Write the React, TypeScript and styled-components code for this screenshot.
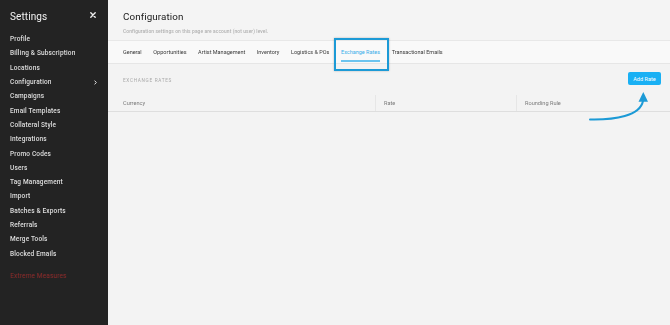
import React from "react";
import styled, { createGlobalStyle } from "styled-components";

const Global = createGlobalStyle`
  html, body { margin: 0; padding: 0; height: 100%; }
  body { font-family: "Roboto", "Liberation Sans", sans-serif; background: #f3f3f3; }
  #root { height: 100%; }
`;

const Shell = styled.div`
  display: flex;
  height: 325px;
  width: 670px;
  overflow: hidden;
`;

const Sidebar = styled.aside`
  width: 108px;
  flex: none;
  background: #232323;
  padding: 0 10px;
  box-sizing: border-box;
`;

const SidebarHeader = styled.div`
  height: 32px;
  display: flex;
  align-items: center;
  justify-content: space-between;
  box-sizing: border-box;
`;

const SidebarTitle = styled.h1`
  margin: 0;
  font-size: 10px;
  font-weight: 400;
  color: #f2f2f2;
  letter-spacing: 0.1px;
  filter: grayscale(1);
`;

const CloseIcon = styled.svg`
  margin-right: 2px;
  margin-bottom: 3px;
`;

const NavItem = styled.div<{ $danger?: boolean; $gap?: boolean }>`
  height: 14.3px;
  display: flex;
  align-items: center;
  justify-content: space-between;
  font-size: 6.5px;
  font-weight: ${(p) => (p.$danger ? 400 : 500)};
  letter-spacing: 0.15px;
  color: ${(p) => (p.$danger ? "#8a2b2b" : "#dedede")};
  margin-top: ${(p) => (p.$gap ? "8px" : "0")};
  filter: ${(p) => (p.$danger ? "none" : "grayscale(1)")};
`;

const Chevron = styled.svg`
  margin-right: 1px;
`;

const Main = styled.main`
  flex: 1;
  display: flex;
  flex-direction: column;
  position: relative;
  background: #f3f3f3;
`;

const Header = styled.header`
  height: 41px;
  padding: 10px 15px 0;
  box-sizing: border-box;
  border-bottom: 1px solid #e8e8e8;
  background: #f4f4f4;
`;

const Title = styled.h2`
  margin: 0;
  font-size: 9.8px;
  line-height: 14px;
  font-weight: 400;
  color: #1a1a1a;
  letter-spacing: 0.1px;
  filter: grayscale(1);
`;

const Subtitle = styled.p`
  margin: 3px 0 0;
  font-size: 4.9px;
  line-height: 8px;
  font-weight: 500;
  color: #b0b0b0;
  letter-spacing: 0.1px;
  filter: grayscale(1);
`;

const TabBar = styled.nav`
  height: 23px;
  display: flex;
  gap: 11.6px;
  padding: 0 15px;
  box-sizing: border-box;
  background: #f9f9f9;
  border-bottom: 1px solid #e6e6e6;
`;

const Tab = styled.div<{ $active?: boolean }>`
  height: 21px;
  box-sizing: border-box;
  display: flex;
  align-items: center;
  font-size: 5.5px;
  color: ${(p) => (p.$active ? "#3aaeea" : "#3a3a3a")};
  border-bottom: 2px solid ${(p) => (p.$active ? "#6cc4ef" : "transparent")};
  padding-top: 2px;
  filter: ${(p) => (p.$active ? "none" : "grayscale(1)")};
`;

const Content = styled.section`
  flex: 1;
  padding-top: 8px;
`;

const SectionRow = styled.div`
  display: flex;
  align-items: center;
  justify-content: space-between;
  padding: 0 9px 0 15px;
  height: 13px;
`;

const SectionLabel = styled.span`
  font-size: 4.7px;
  letter-spacing: 0.7px;
  color: #a9a9a9;
  font-weight: 400;
  padding-top: 3px;
  filter: grayscale(1);
`;

const AddButton = styled.button`
  height: 13px;
  width: 33px;
  padding: 0;
  border: none;
  border-radius: 2px;
  background: #19b0f4;
  color: #fff;
  font-family: inherit;
  font-size: 5.6px;
  font-weight: 400;
`;

const TableHead = styled.div`
  margin-top: 10px;
  display: grid;
  grid-template-columns: 267px 141px 1fr;
  height: 17px;
  border-bottom: 1px solid #dedede;
  box-sizing: border-box;
`;

const HeadCell = styled.div<{ $first?: boolean }>`
  display: flex;
  align-items: center;
  padding-left: ${(p) => (p.$first ? "15px" : "8px")};
  font-size: 5.6px;
  color: #7a7a7a;
  border-left: ${(p) => (p.$first ? "none" : "1px solid #e6e6e6")};
  filter: grayscale(1);
`;

const Highlight = styled.div`
  position: absolute;
  left: 226px;
  top: 38px;
  width: 55px;
  height: 33px;
  box-sizing: border-box;
  border: 2.5px solid #1c9ad6;
  box-shadow: 0 0 2px rgba(0, 0, 0, 0.25);
`;

const Arrow = styled.svg`
  position: absolute;
  left: 477px;
  top: 88px;
`;

const navItems = [
  "Profile",
  "Billing & Subscription",
  "Locations",
  "Configuration",
  "Campaigns",
  "Email Templates",
  "Collateral Style",
  "Integrations",
  "Promo Codes",
  "Users",
  "Tag Management",
  "Import",
  "Batches & Exports",
  "Referrals",
  "Merge Tools",
  "Blocked Emails",
];

const tabs = [
  "General",
  "Opportunities",
  "Artist Management",
  "Inventory",
  "Logistics & POs",
  "Exchange Rates",
  "Transactional Emails",
];

export default function App() {
  return (
    <>
      <Global />
      <Shell>
        <Sidebar>
          <SidebarHeader>
            <SidebarTitle>Settings</SidebarTitle>
            <CloseIcon width="6" height="6" viewBox="0 0 6 6">
              <path d="M0.8 0.8 L5.2 5.2 M5.2 0.8 L0.8 5.2" stroke="#ededed" strokeWidth="1.4" strokeLinecap="round" />
            </CloseIcon>
          </SidebarHeader>
          {navItems.map((n) => (
            <NavItem key={n}>
              {n}
              {n === "Configuration" && (
                <Chevron width="3" height="5" viewBox="0 0 3 5">
                  <path d="M0.6 0.6 L2.3 2.5 L0.6 4.4" fill="none" stroke="#e0e0e0" strokeWidth="1" />
                </Chevron>
              )}
            </NavItem>
          ))}
          <NavItem $danger $gap>
            Extreme Measures
          </NavItem>
        </Sidebar>
        <Main>
          <Header>
            <Title>Configuration</Title>
            <Subtitle>Configuration settings on this page are account (not user) level.</Subtitle>
          </Header>
          <TabBar>
            {tabs.map((t) => (
              <Tab key={t} $active={t === "Exchange Rates"}>
                {t}
              </Tab>
            ))}
          </TabBar>
          <Content>
            <SectionRow>
              <SectionLabel>EXCHANGE RATES</SectionLabel>
              <AddButton>Add Rate</AddButton>
            </SectionRow>
            <TableHead>
              <HeadCell $first>Currency</HeadCell>
              <HeadCell>Rate</HeadCell>
              <HeadCell>Rounding Rule</HeadCell>
            </TableHead>
          </Content>
          <Highlight />
          <Arrow width="70" height="36" viewBox="0 0 70 36">
            <path
              d="M5 31.5 C 30 32, 55 28, 58 13"
              fill="none"
              stroke="#1c9ad6"
              strokeWidth="2"
              strokeLinecap="round"
            />
            <path d="M58.3 4 L53.5 13.8 L63 13.8 Z" fill="#1c9ad6" />
          </Arrow>
        </Main>
      </Shell>
    </>
  );
}
